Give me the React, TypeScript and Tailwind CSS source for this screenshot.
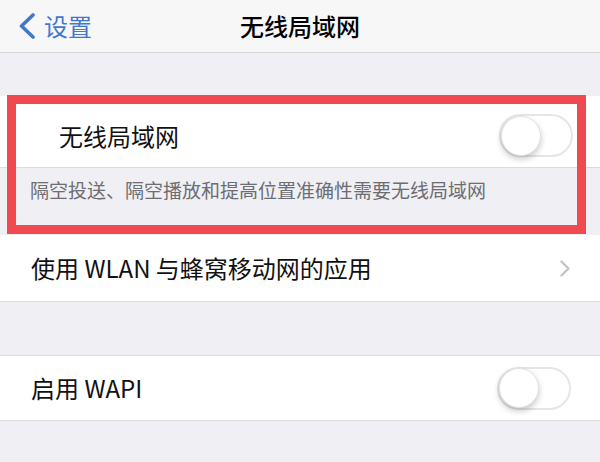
import React from "react"

function Toggle() {
  return (
    <div className="w-[74px] h-[43px] rounded-full border-2 border-[#e6e6ea] bg-white flex items-center">
      <div className="w-[40px] h-[40px] rounded-full bg-white border border-[#e2e2e6] shadow-[0_3px_6px_rgba(0,0,0,0.22)]" />
    </div>
  )
}

export default function App() {
  return (
    <div className="w-[600px] h-[462px] bg-[#efeff4] relative overflow-hidden font-['Noto_Sans_CJK_SC',sans-serif] text-[#111]">
      {/* nav */}
      <div className="h-[53px] bg-[#f7f7f8] border-b border-[#d6d6da] grid grid-cols-[1fr_auto_1fr] items-center">
        <div className="flex items-center pl-[18px]">
          <svg width="18" height="26" viewBox="0 0 18 26" fill="none">
            <path d="M15 2 L3.5 13 L15 24" stroke="#3f78cf" strokeWidth="3.6" strokeLinecap="round" strokeLinejoin="round" />
          </svg>
          <span className="ml-[8px] text-[24px] leading-none text-[#3f78cf]">设置</span>
        </div>
        <div className="text-[24px] leading-none font-medium text-black">无线局域网</div>
        <div />
      </div>

      <div className="h-[43px]" />

      {/* wifi group */}
      <div className="h-[72px] bg-white border-b border-[#dcdce0] flex items-center justify-between pl-[59px] pr-[27px]">
        <span className="text-[24px] leading-none pt-[8px]">无线局域网</span>
        <div className="pt-[8px]">
          <Toggle />
        </div>
      </div>
      <div className="h-[67px] pl-[30px] pt-[12px]">
        <p className="text-[19px] leading-[20px] text-[#6d6d72]">隔空投送、隔空播放和提高位置准确性需要无线局域网</p>
      </div>

      <div className="h-[67px] bg-white border-b border-[#dcdce0] flex items-center justify-between pl-[31px] pr-[30px]">
        <span className="text-[24px] leading-none">使用 WLAN 与蜂窝移动网的应用</span>
        <svg width="10" height="17" viewBox="0 0 10 17" fill="none">
          <path d="M1.5 1.5 L8.5 8.5 L1.5 15.5" stroke="#c4c4c8" strokeWidth="2.4" strokeLinecap="round" strokeLinejoin="round" />
        </svg>
      </div>

      <div className="h-[53px]" />

      <div className="h-[66px] bg-white border-y border-[#dcdce0] flex items-center justify-between pl-[31px] pr-[29px]">
        <span className="text-[24px] leading-none">启用 WAPI</span>
        <Toggle />
      </div>

      {/* annotation */}
      <div className="absolute left-[7px] top-[95px] w-[579px] h-[139px] border-[9px] border-[#ef4a50]" />
    </div>
  )
}
